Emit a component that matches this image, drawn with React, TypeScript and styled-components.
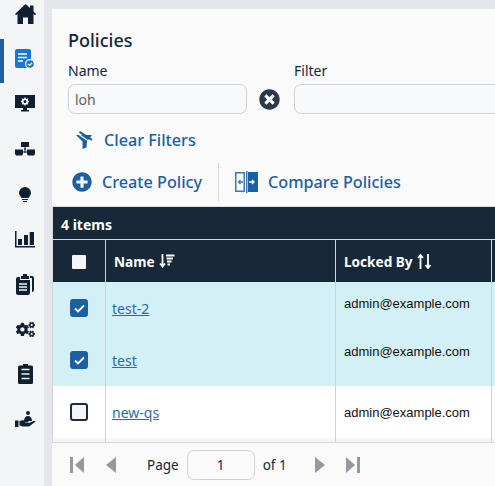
import { Fragment } from "react";
import styled, { createGlobalStyle } from "styled-components";
import { FaCogs, FaPlusCircle, FaTimesCircle } from "react-icons/fa";

const GlobalStyle = createGlobalStyle`
  html, body {
    margin: 0;
    height: 100%;
    overflow: hidden;
    background: #e3e6ea;
    font-family: "Noto Sans", sans-serif;
  }
`;

const Shell = styled.div`
  display: flex;
  width: 495px;
  height: 486px;
  overflow: hidden;
`;

const Sidebar = styled.nav`
  flex: 0 0 44px;
  display: flex;
  flex-direction: column;
  align-items: center;
  gap: 17px;
  background: #f3f5f7;
  color: #0f2033;
`;

const NavItem = styled.div<{ $active?: boolean }>`
  position: relative;
  width: 44px;
  height: 28px;
  display: flex;
  align-items: center;
  justify-content: center;
  padding-left: 6px;
  box-sizing: border-box;

  &::before {
    content: "";
    display: ${(p) => (p.$active ? "block" : "none")};
    position: absolute;
    left: 0;
    top: -6px;
    width: 4px;
    height: 44px;
    background: #1d5fa3;
  }
`;

const Main = styled.main`
  flex: 0 0 560px;
  margin: 9px 0 0 8px;
  background: #fafafa;
  display: flex;
  flex-direction: column;
`;

const Head = styled.section`
  padding: 19px 0 0 16px;
`;

const Title = styled.h1`
  margin: 0;
  height: 24px;
  font-size: 18px;
  line-height: 24px;
  font-weight: 500;
  color: #14263a;
`;

const FilterRow = styled.div`
  display: flex;
  align-items: flex-end;
  margin-top: 10px;
`;

const Field = styled.label<{ $width: number }>`
  display: flex;
  flex-direction: column;
  width: ${(p) => p.$width}px;
  font-size: 14px;
  line-height: 18px;
  color: #14263a;
`;

const TextBox = styled.input`
  box-sizing: border-box;
  width: 100%;
  height: 30px;
  margin-top: 4px;
  padding: 0 6px;
  border: 1px solid #ced1d6;
  border-radius: 7px;
  background: #f8f9fa;
  color: #5c5f63;
  font: 14px "Noto Sans", sans-serif;
`;

const ClearField = styled.span`
  flex: 0 0 47px;
  height: 30px;
  box-sizing: border-box;
  padding-right: 3px;
  display: flex;
  align-items: center;
  justify-content: center;
  color: #2a3a4a;
`;

const LinkButton = styled.button`
  display: flex;
  align-items: center;
  padding: 0;
  border: 0;
  background: none;
  color: #1d5fa3;
  font: 500 16.2px "Noto Sans", sans-serif;
`;

const ClearRow = styled.div`
  height: 24px;
  margin: 14px 0 0 8px;
  display: flex;

  ${LinkButton} {
    gap: 11px;
  }
`;

const ActionRow = styled.div`
  height: 38px;
  margin-top: 11px;
  display: flex;
  align-items: center;
  padding-left: 4px;
`;

const CreateButton = styled(LinkButton)`
  gap: 10px;
`;

const CompareButton = styled(LinkButton)`
  gap: 9px;
`;

const Divider = styled.span`
  width: 1px;
  height: 38px;
  margin: 0 16px;
  background: #d3d6da;
`;

const GridWrap = styled.section`
  margin-top: 5px;
  border-top: 1px solid #d8dbdf;
  flex: 1;
  display: flex;
  flex-direction: column;
`;

const TableBox = styled.div`
  border-left: 1px solid #d3d6da;
`;

const ItemCount = styled.div`
  height: 33px;
  box-sizing: border-box;
  padding-left: 8px;
  background: #172839;
  color: #fff;
  font-size: 14px;
  font-weight: 700;
  line-height: 36px;
  border-bottom: 1px solid #d3d6da;
`;

const Grid = styled.div`
  display: grid;
  grid-template-columns: 53px 230px 156px 120px;
`;

const HeaderCell = styled.div`
  height: 42px;
  box-sizing: border-box;
  display: flex;
  align-items: center;
  gap: 4px;
  padding-left: 8px;
  background: #172839;
  border-right: 1px solid #d3d6da;
  color: #fff;
  font-size: 13.6px;
  font-weight: 700;
`;

const CheckHeaderCell = styled(HeaderCell)`
  justify-content: center;
  padding: 2px 0 0;
`;

const Cell = styled.div<{ $selected?: boolean; $lift?: number }>`
  height: 52px;
  box-sizing: border-box;
  padding: 0 0 ${(p) => p.$lift ?? 0}px 8px;
  background: ${(p) => (p.$selected ? "#d2f0f6" : "#fff")};
  border-right: 1px solid #ced1d6;
  display: flex;
  align-items: center;
`;

const CheckCell = styled(Cell)`
  justify-content: center;
  padding: 0;
`;

const FillerCell = styled.div`
  height: 4px;
  background: #f5f5f5;
  border-right: 1px solid #ced1d6;
`;

const PolicyLink = styled.a`
  margin-left: -2px;
  color: #1f6cb3;
  font-size: 14px;
  text-decoration: underline;
`;

const LockedText = styled.span`
  color: #111;
  font: 13px "Liberation Sans", sans-serif;
`;

const CheckBox = styled.span<{ $checked?: boolean; $plain?: boolean }>`
  box-sizing: border-box;
  width: ${(p) => (p.$plain ? 14 : 18)}px;
  height: ${(p) => (p.$plain ? 14 : 18)}px;
  display: flex;
  align-items: center;
  justify-content: center;
  border-radius: ${(p) => (p.$plain ? 1 : 3)}px;
  border: ${(p) => (p.$plain ? "none" : "2px solid")};
  border-color: ${(p) => (p.$checked ? "#1d5fa3" : "#1c2a3a")};
  background: ${(p) => (p.$checked ? "#1d5fa3" : "#f3f5f7")};
`;

const Pager = styled.footer`
  flex: 1;
  display: flex;
  align-items: center;
  padding-left: 17px;
  border-top: 1px solid #d3d6da;
  font-size: 13.5px;
  color: #14263a;
`;

const PagerIcon = styled.span<{ $left?: number }>`
  width: 16px;
  height: 18px;
  margin-left: ${(p) => p.$left ?? 0}px;
  display: flex;
  align-items: center;
  justify-content: center;
  color: #8f9aa3;
`;

const PageInput = styled.span`
  box-sizing: border-box;
  width: 68px;
  height: 30px;
  margin: 0 8px;
  display: flex;
  align-items: center;
  justify-content: center;
  border: 1px solid #ced1d6;
  border-radius: 7px;
`;

const PageLabel = styled.span<{ $left?: number; $right?: number }>`
  margin-left: ${(p) => p.$left ?? 0}px;
  margin-right: ${(p) => p.$right ?? 0}px;
`;

const HomeIcon = () => (
  <svg width="21" height="20" viewBox="0 0 21 20">
    <path
      d="M10.500 0L15 4V1.500h3.500v6L21 10l-1 1.200-1.500-1.200V20h-5.500v-6.500H8V20H2.500V10L1 11.200 0 10z"
      fill="currentColor"
    />
  </svg>
);

const PolicyDocIcon = () => (
  <svg width="21" height="20" viewBox="0 0 21 20">
    <rect x="0" y="0" width="16" height="19" rx="2" fill="#1976d2" />
    <path d="M3 5h9M3 8.500h9M3 12h5" stroke="#fff" strokeWidth="1.300" />
    <circle cx="15" cy="15" r="5" fill="#fff" />
    <circle cx="15" cy="15" r="3.800" fill="#1976d2" />
    <path d="M13 15l1.500 1.500L17 14" fill="none" stroke="#fff" strokeWidth="1.200" />
  </svg>
);

const DesktopGearIcon = () => (
  <svg width="20" height="18" viewBox="0 0 20 18">
    <path d="M0 0h20v13H12v2h2v1.500H6V15h2v-2H0z" fill="currentColor" />
    <circle cx="10" cy="6.500" r="2.300" fill="none" stroke="#fff" strokeWidth="1.600" />
    <path
      d="M10 2.500v1.500M10 9v1.500M6 6.500h1.500M12.500 6.500H14M7.200 3.700l1 1M11.800 8.300l1 1M7.200 9.300l1-1M11.800 4.700l1-1"
      stroke="#fff"
      strokeWidth="1.300"
    />
  </svg>
);

const NetworkIcon = () => (
  <svg width="20" height="14" viewBox="0 0 20 14">
    <rect x="6" y="0" width="8" height="5" fill="currentColor" />
    <path d="M10 5v6M8 10h4M9 7h2" stroke="currentColor" strokeWidth="1" />
    <path d="M0 7.500h8v4.500l-1 1.500H1l-1-1.500zM12 7.500h8v4.500l-1 1.500h-6l-1-1.500z" fill="currentColor" />
  </svg>
);

const BulbIcon = () => (
  <svg width="12" height="15" viewBox="0 0 12 15">
    <path
      d="M6 0a6 6 0 0 1 6 6c0 2-1.500 3-2.500 5h-7C1.500 9 0 8 0 6a6 6 0 0 1 6-6z"
      fill="currentColor"
    />
    <path d="M3 12h6v1H3zM4 14h4v1H4z" fill="currentColor" />
  </svg>
);

const ChartIcon = () => (
  <svg width="20" height="17" viewBox="0 0 20 17">
    <path
      d="M0 0h1.500v15H20v1.500H0zM3 8h4v6H3zM9 4h4v10H9zM14.700 1H19v13h-4.300z"
      fill="currentColor"
    />
  </svg>
);

const ClipboardsIcon = () => (
  <svg width="18" height="21" viewBox="0 0 18 21">
    <path d="M14 2h2a2 2 0 0 1 2 2v12a2 2 0 0 1-2 2v-14h-2z" fill="currentColor" />
    <path d="M7 0h4v2h2v3H5V2h2z" fill="currentColor" />
    <path
      d="M2 3h2v3h10v13a2 2 0 0 1-2 2H2a2 2 0 0 1-2-2V5a2 2 0 0 1 2-2z"
      fill="currentColor"
    />
    <path d="M3 10h8M3 13h8M3 16h8" stroke="#f3f5f7" strokeWidth="1.500" />
  </svg>
);

const ClipboardIcon = () => (
  <svg width="15" height="20" viewBox="0 0 15 20">
    <path
      d="M5 0h5v1.500h3.500A1.500 1.500 0 0 1 15 3v15.500a1.500 1.500 0 0 1-1.500 1.500h-12A1.500 1.500 0 0 1 0 18.500V3a1.500 1.500 0 0 1 1.500-1.500H5z"
      fill="currentColor"
    />
    <path d="M3.500 5.500h8M3.500 10h8M3.500 14.500h8" stroke="#eef1f4" strokeWidth="1.500" />
  </svg>
);

const HandUserIcon = () => (
  <svg width="21" height="17" viewBox="0 0 21 17">
    <circle cx="13" cy="2" r="2" fill="currentColor" />
    <path d="M9 10c0-3 1.500-5 4-5s4 2 4 5z" fill="currentColor" />
    <rect x="0" y="9.500" width="3.500" height="6.500" fill="currentColor" />
    <path
      d="M4.500 10c2-1 4-1.200 5.500 0h3c1 0 1 1.500 0 1.500h-3v.6h4l5-2.300c1-.4 1.800.7 1 1.300l-6 4.400H8l-3.500-1z"
      fill="currentColor"
    />
  </svg>
);

const ClearFilterIcon = () => (
  <svg width="17" height="18" viewBox="0 0 17 18">
    <path d="M0 4h16l-5 6.500-.5 6-4 1.500v-7.500z" fill="#1d5fa3" />
    <path d="M1.500 2.500L14.500 11.500" stroke="#fafafa" strokeWidth="1.200" />
    <path d="M3.500 0.800L16 8.800" stroke="#1d5fa3" strokeWidth="2" />
  </svg>
);

const CompareIcon = () => (
  <svg width="24" height="22" viewBox="0 0 24 22">
    <path d="M.75 1.750h8.500v18.500h-8.500z" fill="none" stroke="#3f78b3" strokeWidth="1.500" />
    <rect x="11" y="0" width="1.500" height="22" fill="#3f78b3" />
    <rect x="13" y="1" width="10" height="20" fill="#1d5fa3" />
    <path d="M8 11H3.500M5.500 9l-2 2 2 2" fill="none" stroke="#3f78b3" strokeWidth="1.300" />
    <path d="M14 11h5M17 9l2 2-2 2" fill="none" stroke="#fff" strokeWidth="1.300" />
  </svg>
);

const SortDescIcon = () => (
  <svg width="16" height="14" viewBox="0 0 16 14">
    <path d="M3.500 0v12M1 9.500l2.500 3 2.500-3" fill="none" stroke="#fff" strokeWidth="1.800" />
    <path d="M7 1.500h8.500M7.500 4.500h6.500M8 7.500h4.500M8.500 10.500h2.500" stroke="#fff" strokeWidth="1.900" />
  </svg>
);

const SortBothIcon = () => (
  <svg width="15" height="15" viewBox="0 0 15 15">
    <path d="M3.500 15V1.500M1 4l2.500-3L6 4" fill="none" stroke="#fff" strokeWidth="1.800" />
    <path d="M11 0v13.500M8.500 11l2.500 3 2.500-3" fill="none" stroke="#fff" strokeWidth="1.800" />
  </svg>
);

const CheckMark = () => (
  <svg width="11" height="9" viewBox="0 0 11 9">
    <path d="M1 4.500l3 3L10 1.500" fill="none" stroke="#fff" strokeWidth="1.800" />
  </svg>
);

const FirstIcon = () => (
  <svg width="14" height="16" viewBox="0 0 14 16">
    <path d="M0 0h3v16H0zM14 0v16L5 8z" fill="currentColor" />
  </svg>
);

const PrevIcon = () => (
  <svg width="10" height="16" viewBox="0 0 10 16">
    <path d="M10 0v16L0 8z" fill="currentColor" />
  </svg>
);

const NextIcon = () => (
  <svg width="10" height="16" viewBox="0 0 10 16">
    <path d="M0 0v16l10-8z" fill="currentColor" />
  </svg>
);

const LastIcon = () => (
  <svg width="14" height="16" viewBox="0 0 14 16">
    <path d="M14 0h-3v16h3zM0 0v16l9-8z" fill="currentColor" />
  </svg>
);

const navItems = [
  { key: "home", icon: <HomeIcon /> },
  { key: "policies", icon: <PolicyDocIcon />, active: true },
  { key: "monitor", icon: <DesktopGearIcon /> },
  { key: "network", icon: <NetworkIcon /> },
  { key: "ideas", icon: <BulbIcon /> },
  { key: "reports", icon: <ChartIcon /> },
  { key: "tasks", icon: <ClipboardsIcon /> },
  { key: "settings", icon: <FaCogs size={19} /> },
  { key: "audit", icon: <ClipboardIcon /> },
  { key: "services", icon: <HandUserIcon /> },
];

const rows = [
  { name: "test-2", selected: true, lockLift: 10 },
  { name: "test", selected: true, lockLift: 18 },
  { name: "new-qs", selected: false, lockLift: 0 },
];

export default function App() {
  return (
    <Shell>
      <GlobalStyle />
      <Sidebar>
        {navItems.map(({ key, icon, active }) => (
          <NavItem key={key} $active={active}>
            {icon}
          </NavItem>
        ))}
      </Sidebar>
      <Main>
        <Head>
          <Title>Policies</Title>
          <FilterRow>
            <Field $width={179}>
              Name
              <TextBox defaultValue="loh" readOnly />
            </Field>
            <ClearField>
              <FaTimesCircle size={21} />
            </ClearField>
            <Field $width={240}>
              Filter
              <TextBox readOnly />
            </Field>
          </FilterRow>
          <ClearRow>
            <LinkButton>
              <ClearFilterIcon />
              Clear Filters
            </LinkButton>
          </ClearRow>
          <ActionRow>
            <CreateButton>
              <FaPlusCircle size={20} />
              Create Policy
            </CreateButton>
            <Divider />
            <CompareButton>
              <CompareIcon />
              Compare Policies
            </CompareButton>
          </ActionRow>
        </Head>
        <GridWrap>
          <TableBox>
            <ItemCount>4 items</ItemCount>
            <Grid>
              <CheckHeaderCell>
                <CheckBox $plain />
              </CheckHeaderCell>
              <HeaderCell>
                Name <SortDescIcon />
              </HeaderCell>
              <HeaderCell>
                Locked By <SortBothIcon />
              </HeaderCell>
              <HeaderCell />
              {rows.map((row) => (
                <Fragment key={row.name}>
                  <CheckCell $selected={row.selected}>
                    <CheckBox $checked={row.selected}>{row.selected && <CheckMark />}</CheckBox>
                  </CheckCell>
                  <Cell $selected={row.selected}>
                    <PolicyLink href="#">{row.name}</PolicyLink>
                  </Cell>
                  <Cell $selected={row.selected} $lift={row.lockLift}>
                    <LockedText>admin@example.com</LockedText>
                  </Cell>
                  <Cell $selected={row.selected} />
                </Fragment>
              ))}
              <FillerCell />
              <FillerCell />
              <FillerCell />
              <FillerCell />
            </Grid>
          </TableBox>
          <Pager>
            <PagerIcon>
              <FirstIcon />
            </PagerIcon>
            <PagerIcon $left={18}>
              <PrevIcon />
            </PagerIcon>
            <PageLabel $left={28}>Page</PageLabel>
            <PageInput>1</PageInput>
            <PageLabel $right={25}>of 1</PageLabel>
            <PagerIcon>
              <NextIcon />
            </PagerIcon>
            <PagerIcon $left={17}>
              <LastIcon />
            </PagerIcon>
          </Pager>
        </GridWrap>
      </Main>
    </Shell>
  );
}
